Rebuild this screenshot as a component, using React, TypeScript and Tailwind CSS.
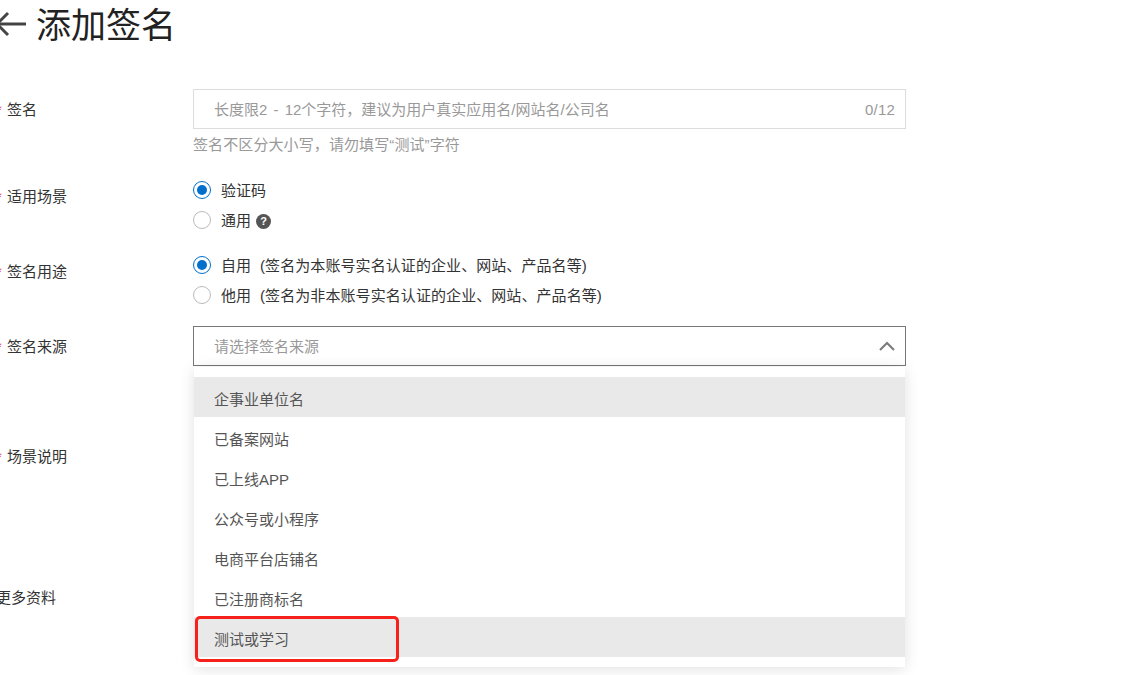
const font = { fontFamily: '"Liberation Sans", "Noto Sans CJK SC", sans-serif' };

const options = [
  "企事业单位名",
  "已备案网站",
  "已上线APP",
  "公众号或小程序",
  "电商平台店铺名",
  "已注册商标名",
  "测试或学习",
];

function Label({ text, star = true, className = "" }: { text: string; star?: boolean; className?: string }) {
  return (
    <div className={`w-[197px] -ml-[4px] shrink-0 flex text-[15px] leading-[20px] text-[#333] ${className}`}>
      {star && <span className="w-[11px] text-[#e0245e]">*</span>}
      {text}
    </div>
  );
}

function Radio({ checked, label, note }: { checked?: boolean; label: string; note?: string }) {
  return (
    <div className="h-[30px] flex items-center text-[15px] text-[#333]">
      <span
        className={`w-[18px] h-[18px] rounded-full border flex items-center justify-center mr-[10px] ${
          checked ? "border-[#0070cc]" : "border-[#bbbbbb]"
        }`}
      >
        {checked && <span className="w-[10px] h-[10px] rounded-full bg-[#0070cc]" />}
      </span>
      <span className="pt-[2px]">{label}</span>
      {note && <span className="ml-[9px] pt-[2px] tracking-[0.08px]">{note}</span>}
      {label === "通用" && (
        <span className="ml-[5px] mt-[2px] w-[15px] h-[15px] rounded-full bg-[#555] text-white text-[11px] font-bold flex items-center justify-center">
          ?
        </span>
      )}
    </div>
  );
}

export default function App() {
  return (
    <div className="w-[1127px] h-[675px] overflow-hidden bg-white relative" style={font}>
      <div className="h-[50px] flex items-center text-[#222]">
        <svg width="26" height="26" viewBox="0 0 26 26" className="mr-[10px] mb-[2px] shrink-0" fill="none" stroke="#444" strokeWidth="3">
          <path d="M26 13H-2" />
          <path d="M8 2-3 13 8 24" />
        </svg>
        <h1 className="text-[35px] leading-[50px] font-normal pt-[1px]">添加签名</h1>
      </div>

      <div className="pt-[39px] flex">
        <Label text="签名" className="pt-[11px]" />
        <div className="w-[713px]">
          <div className="h-[40px] border border-[#dddddd] flex items-center justify-between pl-[20px] pr-[10px] text-[15px] text-[#999]">
            <span className="pt-[2px] [word-spacing:2px]">{"长度限2 - 12个字符\uFF0C建议为用户真实应用名/网站名/公司名"}</span>
            <span className="pt-[2px] tracking-[0.2px]">0/12</span>
          </div>
          <p className="mt-[6px] text-[15px] leading-[20px] text-[#999] tracking-[0.1px]">{"签名不区分大小写\uFF0C请勿填写\u201C测试\u201D字符"}</p>
        </div>
      </div>

      <div className="mt-[20px] flex">
        <Label text="适用场景" className="pt-[12px]" />
        <div>
          <Radio checked label="验证码" />
          <Radio label="通用" />
        </div>
      </div>

      <div className="mt-[15px] flex">
        <Label text="签名用途" className="pt-[12px]" />
        <div>
          <Radio checked label="自用" note="(签名为本账号实名认证的企业、网站、产品名等)" />
          <Radio label="他用" note="(签名为非本账号实名认证的企业、网站、产品名等)" />
        </div>
      </div>

      <div className="mt-[16px] flex">
        <Label text="签名来源" className="pt-[11px]" />
        <div className="w-[713px] relative">
          <div className="h-[40px] border border-[#777] flex items-center justify-between pl-[20px] pr-[10px] text-[15px] text-[#999]">
            <span className="pt-[2px]">请选择签名来源</span>
            <svg width="16" height="10" viewBox="0 0 16 10" fill="none" stroke="#7a7a7a" strokeWidth="2">
              <path d="M1 9 8 2l7 7" />
            </svg>
          </div>
          <ul className="absolute left-[1px] right-[1px] top-[41px] py-[10px] bg-white shadow-[0_2px_14px_rgba(0,0,0,0.12)] text-[15px] text-[#555] z-10">
            {options.map((o, i) => (
              <li key={o} className={`h-[40px] flex items-center pl-[20px] pt-[6px] ${i === 0 || i === 6 ? "bg-[#e9e9e9]" : ""}`}>
                {o}
              </li>
            ))}
          </ul>
          <div className="absolute left-[2px] top-[290px] w-[204px] h-[46px] border-[3px] border-[#f5211a] rounded-[5px] z-20" />
        </div>
      </div>

      <div className="mt-[81px] flex">
        <Label text="场景说明" />
      </div>
      <div className="mt-[121px] flex">
        <Label text="更多资料" star={false} />
      </div>
    </div>
  );
}
